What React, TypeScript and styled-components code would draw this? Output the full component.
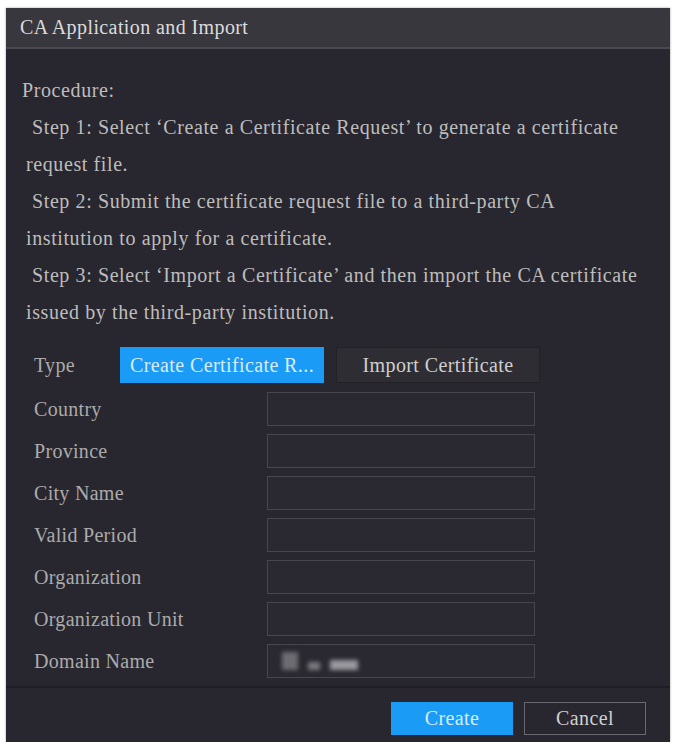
import React from 'react';
import styled, { createGlobalStyle } from 'styled-components';

const Global = createGlobalStyle`
  html, body { margin: 0; padding: 0; background: #fff; }
  * { box-sizing: border-box; }
  body { font-family: "Liberation Serif", "Times New Roman", serif; }
`;

const Dialog = styled.div`
  margin: 8px 0 0 6px;
  width: 664px;
  height: 734px;
  background: #28272f;
  display: flex;
  flex-direction: column;
  box-shadow: 0 0 2px rgba(0, 0, 0, 0.4);
`;

const TitleBar = styled.div`
  height: 41px;
  background: #38373e;
  border-bottom: 2px solid #4a4950;
  display: flex;
  align-items: center;
  padding-left: 14px;
  color: #dcdcdc;
  font-size: 20px;
  letter-spacing: 0.4px;
`;

const Body = styled.div`
  flex: 1;
  padding: 23px 0 0 16px;
  color: #bdbdbd;
  font-size: 20px;
  letter-spacing: 0.6px;
`;

const Line = styled.div<{ indent?: number }>`
  height: 37px;
  line-height: 37px;
  padding-left: ${({ indent }) => indent ?? 0}px;
  white-space: nowrap;
`;

const Row = styled.div`
  display: flex;
  align-items: center;
  height: 42px;
`;

const Label = styled.div`
  width: 245px;
  padding-left: 12px;
  color: #ababab;
  font-size: 20px;
  letter-spacing: 0.3px;
`;

const TypeLabel = styled(Label)`
  width: 98px;
`;

const TypeButton = styled.div<{ active?: boolean }>`
  width: 204px;
  height: 36px;
  margin-right: 12px;
  display: flex;
  align-items: center;
  justify-content: center;
  font-size: 20px;
  letter-spacing: 0.4px;
  background: ${({ active }) => (active ? '#1a9bf6' : '#2e2d34')};
  color: ${({ active }) => (active ? '#d8ecff' : '#cfcfcf')};
  border: 1px solid ${({ active }) => (active ? '#1a9bf6' : '#222127')};
`;

const Input = styled.div`
  width: 268px;
  height: 34px;
  border: 1px solid #47464d;
  background: #2a2931;
  display: flex;
  align-items: center;
  padding-left: 14px;
`;

const Blur = styled.div`
  display: flex;
  gap: 10px;
  align-items: flex-end;
  filter: blur(2px);
`;

const BlurBlock = styled.div<{ w: number; h: number; c: string }>`
  width: ${({ w }) => w}px;
  height: ${({ h }) => h}px;
  background: ${({ c }) => c};
`;

const TypeRow = styled(Row)`
  height: 44px;
  margin: 12px 0 1px;
`;

const Footer = styled.div`
  height: 56px;
  border-top: 2px solid #1e1d23;
  display: flex;
  align-items: flex-start;
  justify-content: flex-end;
  gap: 11px;
  padding: 14px 24px 0 0;
`;

const FootButton = styled.div<{ primary?: boolean }>`
  width: 122px;
  height: 33px;
  display: flex;
  align-items: center;
  justify-content: center;
  font-size: 20px;
  letter-spacing: 0.4px;
  background: ${({ primary }) => (primary ? '#1a9bf6' : '#28272f')};
  color: ${({ primary }) => (primary ? '#d8ecff' : '#d0d0d0')};
  border: 1px solid ${({ primary }) => (primary ? '#1a9bf6' : '#6a6970')};
`;

const fields = ['Country', 'Province', 'City Name', 'Valid Period', 'Organization', 'Organization Unit'];

export default function App() {
  return (
    <>
      <Global />
      <Dialog>
        <TitleBar>CA Application and Import</TitleBar>
        <Body>
          <Line>Procedure:</Line>
          <Line indent={10}>Step 1: Select ‘Create a Certificate Request’ to generate a certificate</Line>
          <Line indent={4}>request file.</Line>
          <Line indent={10}>Step 2: Submit the certificate request file to a third-party CA</Line>
          <Line indent={4}>institution to apply for a certificate.</Line>
          <Line indent={10}>Step 3: Select ‘Import a Certificate’ and then import the CA certificate</Line>
          <Line indent={4}>issued by the third-party institution.</Line>
          <TypeRow>
            <TypeLabel>Type</TypeLabel>
            <TypeButton active>Create Certificate R...</TypeButton>
            <TypeButton>Import Certificate</TypeButton>
          </TypeRow>
          {fields.map((f) => (
            <Row key={f}>
              <Label>{f}</Label>
              <Input />
            </Row>
          ))}
          <Row>
            <Label>Domain Name</Label>
            <Input>
              <Blur>
                <BlurBlock w={16} h={18} c="#6d6c73" />
                <BlurBlock w={12} h={8} c="#7a7980" />
                <BlurBlock w={28} h={10} c="#9a999f" />
              </Blur>
            </Input>
          </Row>
        </Body>
        <Footer>
          <FootButton primary>Create</FootButton>
          <FootButton>Cancel</FootButton>
        </Footer>
      </Dialog>
    </>
  );
}
